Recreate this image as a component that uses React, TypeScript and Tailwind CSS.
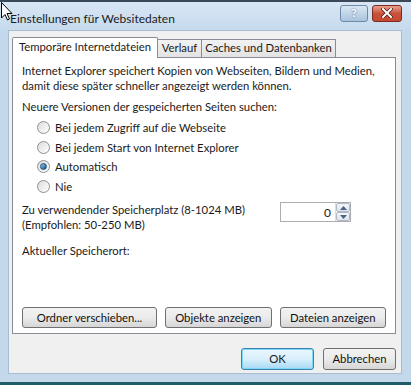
import React from "react";

function Radio({ checked, label }: { checked?: boolean; label: string }) {
  return (
    <div className="flex items-center h-[19.5px]">
      <div className="w-[13px] h-[13px] rounded-full border border-[#8f8f8f] bg-gradient-to-br from-[#dcdcdc] to-[#ffffff] flex items-center justify-center">
        {checked && (
          <div className="w-[7px] h-[7px] rounded-full bg-gradient-to-br from-[#8fd0f0] to-[#0e4e86] border border-[#1a4f7a]" />
        )}
      </div>
      <span className="ml-[5px]">{label}</span>
    </div>
  );
}

function Btn({ children, className = "" }: { children: React.ReactNode; className?: string }) {
  return (
    <div
      className={
        "h-[21px] rounded-[3px] border border-[#707070] bg-gradient-to-b from-[#f2f2f2] via-[#ebebeb] to-[#d6d6d6] flex items-center justify-center text-[#111] " +
        className
      }
    >
      {children}
    </div>
  );
}

export default function App() {
  return (
    <div
      className="relative w-[411px] h-[385px] overflow-hidden bg-[#c4d8ec] flex flex-col text-[11.3px] text-[#1a1a1a] whitespace-nowrap"
      style={{ fontFamily: 'Lato, "Noto Sans", sans-serif' }}
    >
      <div className="h-[2px] bg-[#3b4a5a]" />
      {/* Title bar */}
      <div className="h-[28px] flex items-center pl-[10px] pr-[9px] bg-gradient-to-b from-[#d8e6f4] to-[#c6daee]">
        <span className="text-[12px] text-[#1b1b1b] mt-[5px]">Einstellungen für Websitedaten</span>
        <div className="ml-auto flex gap-[4px] mt-[-6px]">
          <div className="w-[28px] h-[17px] rounded-[3px] border border-[#6d8aa8] bg-gradient-to-b from-[#dbe8f4] to-[#a9c3dd] flex items-center justify-center text-white font-bold text-[12px] leading-none" style={{ textShadow: "0 0 2px #3a5a7a" }}>
            ?
          </div>
          <div className="w-[30px] h-[17px] rounded-[3px] border border-[#7a2a1e] bg-gradient-to-b from-[#e8a08e] via-[#c9503a] to-[#c44a30] flex items-center justify-center">
            <svg width="12" height="10" viewBox="0 0 12 10">
              <path d="M2 1 L10 9 M10 1 L2 9" stroke="#4a1a10" strokeWidth="3.4" strokeLinecap="square" />
              <path d="M2 1 L10 9 M10 1 L2 9" stroke="#ffffff" strokeWidth="2" strokeLinecap="square" />
            </svg>
          </div>
        </div>
      </div>
      {/* Client */}
      <div className="flex-1 mx-[8px] mr-[9px] bg-[#f0f0f0] border border-[#a9bdd2] flex flex-col px-[3px] pt-[5px]">
        {/* tabs */}
        <div className="flex items-end h-[21px] relative z-10">
          <div className="w-[146px] h-[21px] bg-white border border-[#898c95] border-b-0 flex items-center justify-center rounded-t-[2px] mb-[-1px] pb-[1px]">
            Temporäre Internetdateien
          </div>
          <div className="w-[44px] h-[18px] bg-gradient-to-b from-[#f2f2f2] to-[#e3e3e3] border border-[#898c95] border-b-0 border-l-0 flex items-center justify-center">
            Verlauf
          </div>
          <div className="w-[134px] h-[18px] bg-gradient-to-b from-[#f2f2f2] to-[#e3e3e3] border border-[#898c95] border-b-0 border-l-0 flex items-center justify-center">
            Caches und Datenbanken
          </div>
        </div>
        <div className="h-[277px] bg-white border border-[#898c95] mr-[2px] px-[9px] pt-[5px] flex flex-col leading-[15px]">
          <div>Internet Explorer speichert Kopien von Webseiten, Bildern und Medien,</div>
          <div>damit diese später schneller angezeigt werden können.</div>
          <div className="mt-[6px]">Neuere Versionen der gespeicherten Seiten suchen:</div>
          <div className="pl-[15px] mt-[4px] flex flex-col">
            <Radio label="Bei jedem Zugriff auf die Webseite" />
            <Radio label="Bei jedem Start von Internet Explorer" />
            <Radio checked label="Automatisch" />
            <Radio label="Nie" />
          </div>
          <div className="flex mt-[6px]">
            <div className="flex flex-col">
              <div>Zu verwendender Speicherplatz (8-1024 MB)</div>
              <div>(Empfohlen: 50-250 MB)</div>
            </div>
            <div className="ml-auto mr-[35px] w-[71px] h-[20px] border border-[#abadb3] bg-white flex items-stretch">
              <div className="flex-1 flex items-center justify-end pr-[4px] text-[12px]">0</div>
              <div className="w-[15px] flex flex-col border-l border-[#dcdcdc]">
                <div className="flex-1 border border-[#b0b8c6] rounded-[2px] bg-gradient-to-b from-[#f4f6f9] to-[#dfe4ec] flex items-center justify-center">
                  <svg width="7" height="4" viewBox="0 0 7 4"><path d="M0 4 L3.5 0 L7 4 Z" fill="#4d6185" /></svg>
                </div>
                <div className="flex-1 border border-[#b0b8c6] rounded-[2px] bg-gradient-to-b from-[#f4f6f9] to-[#dfe4ec] flex items-center justify-center">
                  <svg width="7" height="4" viewBox="0 0 7 4"><path d="M0 0 L3.5 4 L7 0 Z" fill="#4d6185" /></svg>
                </div>
              </div>
            </div>
          </div>
          <div className="mt-[11px]">Aktueller Speicherort:</div>
          <div className="mt-auto mb-[5px] flex gap-[8px]">
            <Btn className="w-[137px]">Ordner verschieben...</Btn>
            <Btn className="w-[108px]">Objekte anzeigen</Btn>
            <Btn className="w-[108px]">Dateien anzeigen</Btn>
          </div>
        </div>
        <div className="flex justify-end gap-[9px] mt-[14px] pr-[2px]">
          <div className="w-[73px] h-[22px] rounded-[3px] border border-[#3c7fb1] bg-gradient-to-b from-[#eaf6fd] via-[#d9f0fc] to-[#a7d9f5] flex items-center justify-center shadow-[inset_0_0_0_1px_#7ddaf7]">
            OK
          </div>
          <Btn className="w-[73px] h-[22px]">Abbrechen</Btn>
        </div>
      </div>
      <div className="h-[8px]" />
      <div className="h-[3px] bg-[#1e5c6a]" />
      {/* mouse cursor overlay */}
      <svg className="absolute left-[1px] top-[2px]" width="12" height="19" viewBox="0 0 12 19">
        <path d="M0.5 0.5 L0.5 16 L4 12.5 L6.5 18 L8.5 17 L6 11.5 L11 11.5 Z" fill="#ffffff" stroke="#000" strokeWidth="1" />
      </svg>
    </div>
  );
}
